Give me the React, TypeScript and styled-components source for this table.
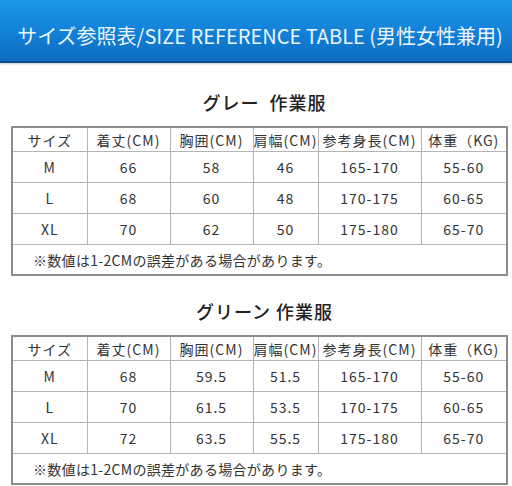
import styled, { createGlobalStyle } from "styled-components";

type TRow = {
  size: string;
  length: string;
  chest: string;
  shoulder: string;
  height: string;
  weight: string;
};

type TChart = {
  title: string;
  rows: TRow[];
};

const charts: TChart[] = [
  {
    title: "グレー  作業服",
    rows: [
      { size: "M", length: "66", chest: "58", shoulder: "46", height: "165-170", weight: "55-60" },
      { size: "L", length: "68", chest: "60", shoulder: "48", height: "170-175", weight: "60-65" },
      { size: "XL", length: "70", chest: "62", shoulder: "50", height: "175-180", weight: "65-70" },
    ],
  },
  {
    title: "グリーン 作業服",
    rows: [
      { size: "M", length: "68", chest: "59.5", shoulder: "51.5", height: "165-170", weight: "55-60" },
      { size: "L", length: "70", chest: "61.5", shoulder: "53.5", height: "170-175", weight: "60-65" },
      { size: "XL", length: "72", chest: "63.5", shoulder: "55.5", height: "175-180", weight: "65-70" },
    ],
  },
];

const columns = [75, 83, 83, 65, 103, 86];
const heads = ["サイズ", "着丈(CM)", "胸囲(CM)", "肩幅(CM)", "参考身長(CM)", "体重（KG)"];

const App = () => {
  return (
    <>
      <GlobalStyle />
      <Page>
        <Banner>
          <BannerText>サイズ参照表/SIZE REFERENCE TABLE (男性女性兼用)</BannerText>
        </Banner>
        {charts.map((chart, i) => (
          <Section key={chart.title} first={i === 0}>
            <Title>{chart.title}</Title>
            <Table>
              <colgroup>
                {columns.map((w, c) => (
                  <col key={c} style={{ width: w }} />
                ))}
              </colgroup>
              <thead>
                <tr>
                  {heads.map((h) => (
                    <HeadCell key={h}>{h}</HeadCell>
                  ))}
                </tr>
              </thead>
              <tbody>
                {chart.rows.map((r) => (
                  <tr key={r.size}>
                    <Cell>{r.size}</Cell>
                    <Cell>{r.length}</Cell>
                    <Cell>{r.chest}</Cell>
                    <Cell>{r.shoulder}</Cell>
                    <Cell>{r.height}</Cell>
                    <Cell>{r.weight}</Cell>
                  </tr>
                ))}
                <tr>
                  <NoteCell colSpan={6}>※数値は1-2CMの誤差がある場合があります。</NoteCell>
                </tr>
              </tbody>
            </Table>
          </Section>
        ))}
      </Page>
    </>
  );
};
export default App;

const GlobalStyle = createGlobalStyle`
  html, body {
    margin: 0;
    padding: 0;
    background: #ffffff;
  }
  body {
    font-family: "Noto Sans CJK JP", "Noto Sans", sans-serif;
    color: #2a2a2a;
  }
`;

const Page = styled.div`
  width: 512px;
  height: 486px;
  overflow: hidden;
  background: #ffffff;
`;

const Banner = styled.div`
  height: 61px;
  background: linear-gradient(180deg, #1c97ea 0%, #1180d6 55%, #0d6cc0 100%);
  border-bottom: 2px solid #0b4a86;
  box-shadow: 0 1px 2px rgba(0, 60, 120, 0.25);
  display: flex;
  align-items: center;
  justify-content: center;
  padding-left: 8px;
`;

const BannerText = styled.h1`
  margin: 0;
  margin-top: 10px;
  font-size: 20px;
  font-weight: 400;
  color: #eef6ff;
  white-space: nowrap;
  letter-spacing: 0;
`;

const Section = styled.section<{ first: boolean }>`
  padding-top: ${(p) => (p.first ? 27 : 23)}px;
  padding-left: 11px;
  display: flex;
  flex-direction: column;
`;

const Title = styled.h2`
  margin: 0 0 12px;
  height: 24px;
  line-height: 24px;
  font-size: 18px;
  font-weight: 500;
  letter-spacing: 1px;
  color: #222;
  text-align: center;
  white-space: pre;
  padding-left: 6px;
`;

const Table = styled.table`
  width: 495px;
  table-layout: fixed;
  border-collapse: collapse;
  border: 2px solid #8c8c8c;
  font-size: 14px;
  letter-spacing: 1px;
  color: #333;
  td, th {
    border: 1px solid #b4b4b4;
    padding: 0;
    text-align: center;
    white-space: nowrap;
  }
`;

const HeadCell = styled.th`
  height: 23px;
  font-weight: 400;
`;

const Cell = styled.td`
  height: 30px;
`;

const NoteCell = styled.td`
  && {
    height: 29px;
    text-align: left;
    padding-left: 20px;
    letter-spacing: 0.3px;
  }
`;
